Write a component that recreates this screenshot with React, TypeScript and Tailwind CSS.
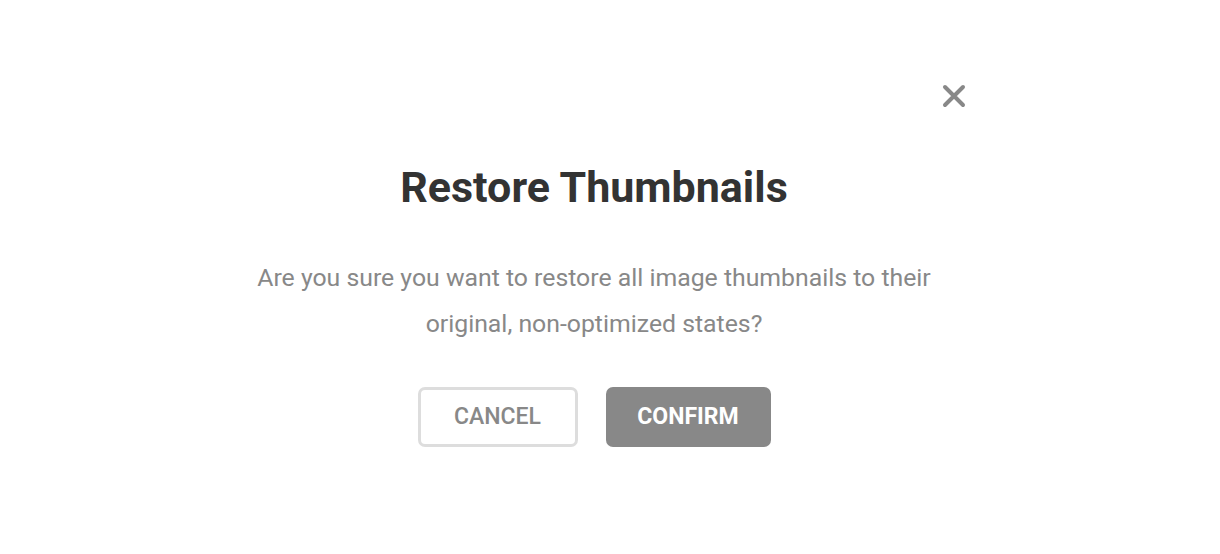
export default function App() {
  return (
    <div className="min-h-[554px] w-full bg-white flex justify-center pr-[32px]" style={{ fontFamily: 'Roboto, "Liberation Sans", sans-serif' }}>
      <div className="w-[742px] flex flex-col items-center pt-[84px]">
        <div className="w-full flex justify-end mr-[-2px]">
          <button className="text-[#888888] block">
            <svg width="24" height="24" viewBox="0 0 24 24" className="block">
              <path d="M3 3 L21 21 M21 3 L3 21" stroke="currentColor" strokeWidth="4" strokeLinecap="round" fill="none" />
            </svg>
          </button>
        </div>
        <h1 className="mt-[53px] text-[43px] leading-[52px] font-bold text-[#333333]">Restore Thumbnails</h1>
        <p className="mt-[42px] text-[24.8px] leading-[46px] text-[#888888] text-center w-[700px]">
          Are you sure you want to restore all image thumbnails to their original, non-optimized states?
        </p>
        <div className="mt-[40px] flex gap-[28px]">
          <button className="w-[160px] h-[60px] rounded-[7px] border-[3px] border-[#dddddd] bg-white text-[#888888] text-[23px] font-medium">
            CANCEL
          </button>
          <button className="w-[165px] h-[60px] rounded-[7px] bg-[#888888] text-white text-[23px] font-bold">
            CONFIRM
          </button>
        </div>
      </div>
    </div>
  );
}
